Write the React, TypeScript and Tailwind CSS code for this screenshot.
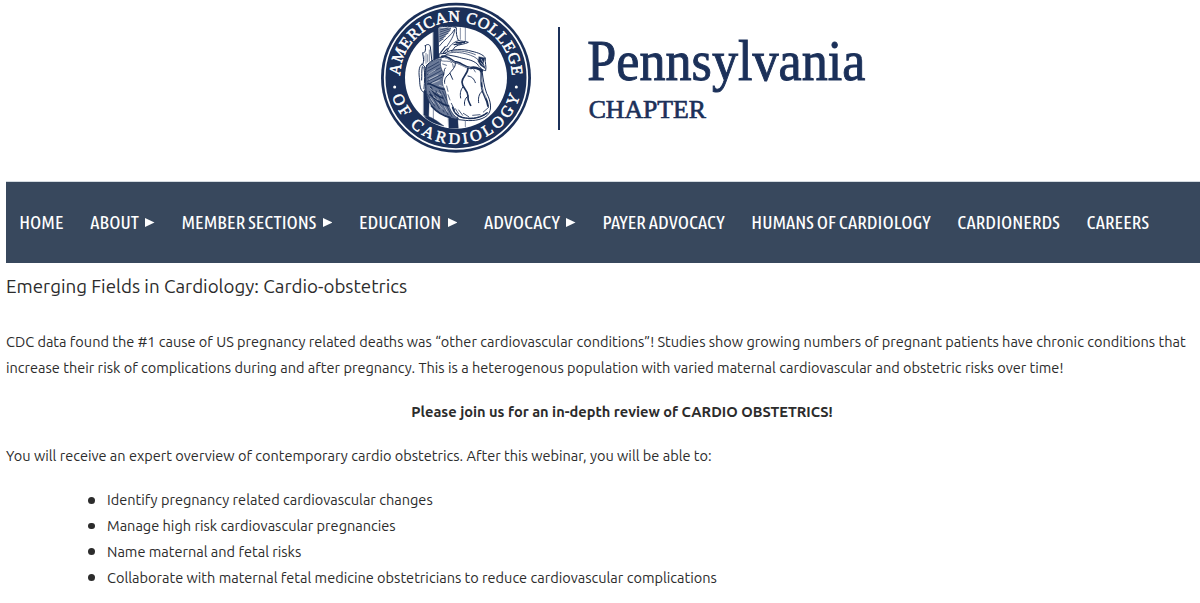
type NavEntry = { label: string; menu?: boolean };

const NAV: NavEntry[] = [
  { label: 'HOME' },
  { label: 'ABOUT', menu: true },
  { label: 'MEMBER SECTIONS', menu: true },
  { label: 'EDUCATION', menu: true },
  { label: 'ADVOCACY', menu: true },
  { label: 'PAYER ADVOCACY' },
  { label: 'HUMANS OF CARDIOLOGY' },
  { label: 'CARDIONERDS' },
  { label: 'CAREERS' },
];

const GOALS = [
  'Identify pregnancy related cardiovascular changes',
  'Manage high risk cardiovascular pregnancies',
  'Name maternal and fetal risks',
  'Collaborate with maternal fetal medicine obstetricians to reduce cardiovascular complications',
];

const NAVY = '#1b3059';

function Heart() {
  return (
    <g fill="none" stroke={NAVY} strokeWidth="3" strokeLinecap="round" strokeLinejoin="round">
      {/* rear columns */}
      <path d="M172 84 L190 80 L190 190 L172 190 Z" fill={NAVY} strokeWidth="1" />
      <path d="M143 262 L160 290 L158 352 L143 346 Z" fill={NAVY} strokeWidth="1" />
      <path d="M217 345 L245 350 L247 385 L219 385 Z" fill={NAVY} strokeWidth="1" />
      <path d="M268 82 V122 M268 362 V380 M253 84 V118 M172 300 V366" strokeWidth="1.6" />
      <path d="M146 350 C158 345 170 356 182 362 L204 378 C186 374 160 366 146 350 Z" fill={NAVY} strokeWidth="1" />
      {/* upper vessels */}
      <path d="M187 82 C200 78 230 78 241 83 C240 98 242 110 247 121 C256 125 268 123 277 127 C268 133 248 132 238 140 C232 146 230 152 226 158 L188 162 Z" fill="#fff" />
      <path d="M188 84 L226 82 C224 96 206 108 190 128 Z" fill="#8b97ae" stroke="none" />
      <path d="M236 88 C226 108 204 118 190 138 M236 90 C234 108 224 122 212 140 M247 122 C232 126 220 138 214 152" strokeWidth="2.6" />
      <path d="M192 90 L216 84 M192 96 L224 86 M192 103 L222 92 M191 110 L216 100 M191 117 L208 109 M190 124 L202 117" strokeWidth="2.2" />
      <path d="M240 128 L266 127 M234 134 L256 131 M194 158 L208 140 M202 158 L214 146" strokeWidth="3.4" />
      {/* left vessels */}
      <path d="M148 137 C154 131 161 133 163 140 L168 186 L146 206 L140 194 C146 180 140 166 140 158 C147 160 150 152 148 137 Z" fill="#fff" />
      <path d="M150 160 V190 M155 164 V186 M144 168 V182 M160 150 V184" strokeWidth="1.6" />
      <path d="M138 193 C127 198 128 220 131 240 C131 258 134 272 142 276 C150 272 151 252 149 232 C150 212 149 196 138 193 Z" fill="#fff" />
      <path d="M144 202 C147 220 146 246 144 266 M139 200 C136 214 138 226 137 240" strokeWidth="3" />
      {/* body */}
      <path d="M152 196 C162 182 180 176 200 170 C218 160 246 158 268 168 C292 176 312 190 318 212 C322 240 324 258 332 280 C344 302 350 330 334 346 C316 362 284 364 258 360 C230 358 202 348 182 330 C162 316 152 296 150 270 C148 240 148 216 152 196 Z" fill="#fff" />
      <path d="M152 198 C164 184 182 178 196 176 C190 190 194 206 204 222 C198 238 196 250 206 268 C214 286 210 306 220 322 C226 338 236 350 248 356 C220 356 194 344 180 328 C160 314 152 292 151 268 C149 240 149 218 152 198 Z" fill="#6b7a98" strokeWidth="2" />
      <g stroke={NAVY} strokeWidth="2.2">
        <path d="M156 204 L188 186 M154 214 L190 194 M154 224 L192 204 M154 234 L196 212 M154 244 L200 222 M154 254 L197 232 M155 284 L176 318 M160 274 L190 326 M170 274 L204 336 M180 272 L216 344 M190 270 L228 350 M200 274 L212 300" />
        <path d="M156 250 C170 252 182 266 204 268 M164 262 C172 278 186 290 200 294 M162 284 C178 296 196 314 218 318 M166 318 C180 334 200 348 222 352" strokeWidth="5" />
      </g>
      <g stroke="#fff" strokeWidth="1.6">
        <path d="M158 222 L178 210 M160 238 L186 225 M168 250 L190 241 M162 264 L176 276 M172 290 L186 300 M186 308 L200 328 M204 318 L214 336 M190 256 L202 260 M164 296 L174 310 M184 278 L196 284" />
      </g>
      {/* great vessel over the body */}
      <path d="M206 160 C224 146 262 146 288 154 C306 158 322 164 328 174 C326 188 332 198 329 212 C320 212 310 202 304 192 C288 178 268 178 250 172 C232 166 216 168 206 160 Z" fill="#fff" />
      <path d="M214 160 C238 154 264 158 284 166 C298 170 308 180 316 190 M226 154 C254 150 280 156 298 164" strokeWidth="2.2" />
      <path d="M309 170 L327 174 L322 190 L328 206 L313 196 L306 184 Z" fill={NAVY} strokeWidth="1" />
      <path d="M316 178 L320 186 M314 188 L322 197" stroke="#fff" strokeWidth="1.6" />
      {/* coronary branches */}
      <path d="M198 170 C212 168 222 178 236 186 C252 186 264 202 284 204 C298 198 306 206 318 212" strokeWidth="7.5" />
      <path d="M204 172 C216 174 226 182 238 188 C252 190 264 204 282 204" stroke="#fff" strokeWidth="1.6" />
      <path d="M276 204 C276 222 258 230 258 246 C258 264 276 270 276 288 C274 302 278 306 284 316" strokeWidth="5" />
      <path d="M314 210 C318 230 314 248 318 264 C320 284 334 296 336 318" strokeWidth="6" />
      <path d="M314 218 L317 246 M318 262 L330 294" stroke="#fff" strokeWidth="1.4" />
      <path d="M238 188 C240 204 226 210 220 222 C208 230 204 240 206 250 M222 220 L230 238 M276 228 C288 230 294 236 298 248 M260 262 C252 272 252 284 254 294 M276 288 C266 296 264 306 266 316 M318 274 C308 282 306 296 308 308 M208 204 C202 210 206 218 202 226" strokeWidth="3" />
      <path d="M196 182 C206 186 218 180 228 188 M200 192 L212 196 M230 192 L232 202 M292 206 L298 216 M212 258 L216 274 M216 284 L222 300" strokeWidth="2" />
      {/* base shading */}
      <path d="M230 322 C234 340 248 352 268 354 C292 358 316 352 334 338" strokeWidth="5" strokeDasharray="5 4" />
      <path d="M238 326 L248 342 M248 330 L260 346 M262 340 L278 350 M290 346 L312 344 M322 336 L338 322 M226 310 L236 330 M246 350 L240 362" strokeWidth="2.4" />
    </g>
  );
}

function Logo() {
  return (
    <svg className="ml-[376px] block h-[180px] w-[600px] shrink-0 overflow-visible" viewBox="0 0 1800 540" role="img" aria-label="American College of Cardiology, Pennsylvania Chapter">
      <defs>
        <path id="arc-top" d="M72 233 A168 168 0 0 1 408 233" />
        <path id="arc-bottom" d="M41 233 A199 199 0 0 0 439 233" />
      </defs>
      <circle cx="240" cy="233" r="225" fill={NAVY} />
      <circle cx="240" cy="233" r="214" fill="none" stroke="#fff" strokeWidth="5" />
      <circle cx="240" cy="233" r="153" fill="#fff" />
      <Heart />
      <g fill="#fff" className="font-['Liberation_Serif',serif]" fontSize="48" stroke="#fff" strokeWidth="1.6">
        <text>
          <textPath href="#arc-top" startOffset="6" textLength="516">AMERICAN COLLEGE</textPath>
        </text>
        <text>
          <textPath href="#arc-bottom" startOffset="56" textLength="514">OF CARDIOLOGY</textPath>
        </text>
      </g>
      <circle cx="56" cy="261" r="4.5" fill="#fff" />
      <circle cx="421" cy="261" r="4.5" fill="#fff" />
      <rect x="546" y="81" width="6" height="309" fill={NAVY} />
      <g fill={NAVY} stroke={NAVY} className="font-['Liberation_Serif',serif]">
        <text x="634" y="241" fontSize="174" strokeWidth="3" textLength="834" lengthAdjust="spacingAndGlyphs">Pennsylvania</text>
        <text x="638" y="355" fontSize="77" strokeWidth="2" textLength="352" lengthAdjust="spacingAndGlyphs">CHAPTER</text>
      </g>
    </svg>
  );
}

export default function App() {
  return (
    <div className="flex h-[603px] w-[1200px] flex-col overflow-hidden bg-white pl-1.5 font-['Ubuntu','Noto_Sans',sans-serif] text-[#2c2c2c]">
      <header className="-ml-1.5 flex h-[181px] shrink-0">
        <Logo />
      </header>

      <nav className="flex h-[82px] shrink-0 items-center gap-[26.6px] border-t border-[#d3dae0] bg-[#38485d] pl-[13.3px] text-[18.75px] leading-[19px] font-medium text-white [font-stretch:75%]">
        {NAV.map((item) => (
          <a key={item.label} className="flex items-center gap-[6.5px] whitespace-nowrap">
            {item.label}
            {item.menu && (
              <svg className="h-[9px] w-[9.5px]" viewBox="0 0 9.5 9" fill="currentColor">
                <path d="M0 0 L9.5 4.5 L0 9 Z" />
              </svg>
            )}
          </a>
        ))}
      </nav>

      <main className="flex flex-col text-[14.545px] leading-[25.7px]">
        <h1 className="mt-[11px] text-[18.75px] leading-[26px]">Emerging Fields in Cardiology: Cardio-obstetrics</h1>
        <p className="mt-[29.3px] whitespace-nowrap">
          CDC data found the #1 cause of US pregnancy related deaths was “other cardiovascular conditions”! Studies show growing numbers of pregnant patients have chronic conditions that
          <br />
          increase their risk of complications during and after pregnancy. This is a heterogenous population with varied maternal cardiovascular and obstetric risks over time!
        </p>
        <p className="mt-[18.4px] pl-[38px] text-center text-[14.62px] font-bold">Please join us for an in-depth review of CARDIO OBSTETRICS!</p>
        <p className="mt-[18.4px]">
          You will receive an expert overview of contemporary cardio obstetrics. After this webinar, you will be able to:
        </p>
        <ul className="mt-[18.6px] flex flex-col pl-[82px]">
          {GOALS.map((goal) => (
            <li key={goal} className="flex items-center gap-[12.5px]">
              <span className="size-[6.5px] rounded-full bg-current" />
              {goal}
            </li>
          ))}
        </ul>
      </main>
    </div>
  );
}
